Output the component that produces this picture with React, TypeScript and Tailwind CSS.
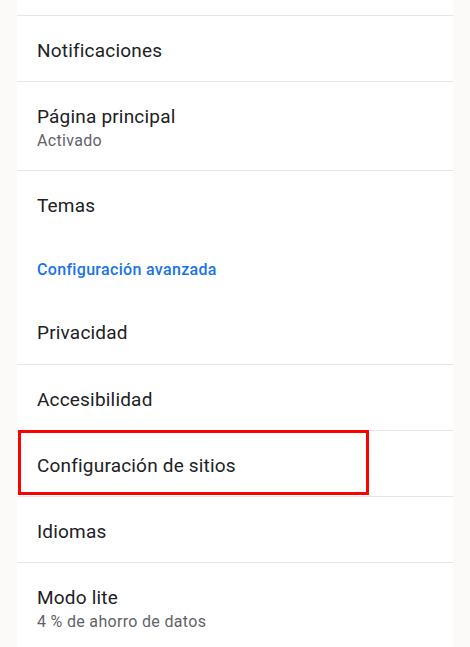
import React from 'react';

type Item = {
  title: string;
  subtitle?: string;
  highlighted?: boolean;
  divider?: boolean;
};

const Row: React.FC<Item> = ({ title, subtitle, highlighted, divider = true }) => (
  <div className={`relative ${divider ? 'border-t border-[#e6e6e6]' : ''}`}>
    <div className={`flex flex-col justify-center px-5 pt-[4px] ${subtitle ? 'h-[88px]' : divider ? 'h-[65px]' : 'h-[66px]'}`}>
      <span className="text-[19px] leading-6 tracking-[0.01em] text-[#202124]">{title}</span>
      {subtitle && <span className="text-[16px] leading-5 mt-[2px] tracking-[0.02em] text-[#5f6368]">{subtitle}</span>}
    </div>
    {highlighted && (
      <div className="absolute left-[1px] top-[-1px] w-[351px] h-[65px] border-[3px] border-[#ff0000] pointer-events-none" />
    )}
  </div>
);

const App: React.FC = () => {
  return (
    <div className="min-h-screen bg-[#fbfaf8] overflow-hidden" style={{ fontFamily: 'Roboto, "Noto Sans", sans-serif' }}>
      <div className="mx-[17px] pt-[15px] bg-white">
        <Row title="Notificaciones" />
        <Row title="Página principal" subtitle="Activado" />
        <Row title="Temas" />

        {/* Section header */}
        <div className="h-[62px] px-5 pt-[22px]">
          <span className="text-[16px] leading-5 font-medium tracking-[0.02em] text-[#1a73e8]">Configuración avanzada</span>
        </div>

        <Row title="Privacidad" divider={false} />
        <Row title="Accesibilidad" />
        <Row title="Configuración de sitios" highlighted />
        <Row title="Idiomas" />
        <Row title="Modo lite" subtitle="4 % de ahorro de datos" />
      </div>
    </div>
  );
};

export default App;
